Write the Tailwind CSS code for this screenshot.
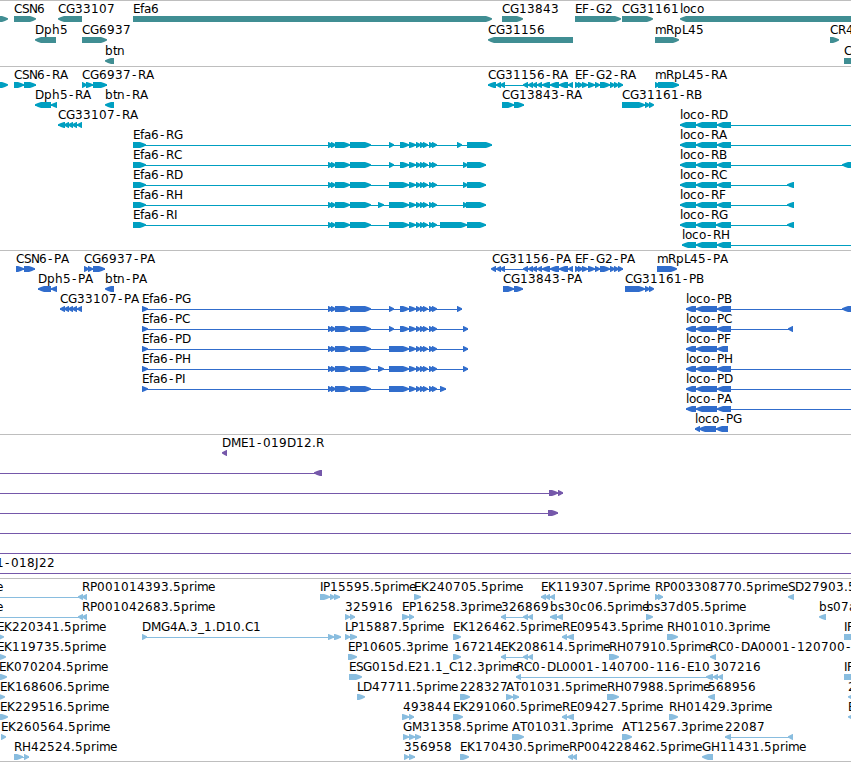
<!DOCTYPE html>
<html lang="en">
<head>
    <meta charset="UTF-8">
    <meta name="viewport" content="width=device-width, initial-scale=1.0">
    <title>Genome Browser</title>
    <script src="https://cdn.jsdelivr.net/npm/@tailwindcss/browser@4"></script>
</head>
<body class="bg-white overflow-hidden">

    <main id="tracks" class="flex flex-col w-[851px] h-[762px] border-b border-[#bebebe] overflow-hidden font-['DejaVu_Sans',sans-serif] text-[12px] text-black">
        <!-- Genes -->
        <section class="h-[66px] shrink-0 border-t border-[#bebebe]"><svg id="genes" class="block w-full h-full fill-[#408e93]"></svg></section>
        <!-- Transcripts -->
        <section class="h-[184px] shrink-0 border-t border-[#bebebe]"><svg id="transcripts" class="block w-full h-full fill-[#009fc1]"></svg></section>
        <!-- Proteins -->
        <section class="h-[184px] shrink-0 border-t border-[#bebebe]"><svg id="proteins" class="block w-full h-full fill-[#316dcc]"></svg></section>
        <!-- Clones -->
        <section class="h-[144px] shrink-0 border-t border-[#bebebe]"><svg id="clones" class="block w-full h-full fill-[#7558aa]"></svg></section>
        <!-- ESTs -->
        <section class="h-[183px] shrink-0 border-t border-[#bebebe]"><svg id="ests" class="block w-full h-full fill-[#89bddf]"></svg></section>
    </main>

    <script>
        // --- Feature data: [row, label, label x, strand, "start,end ..."] ---
        const genes = [
            [0, '', 0, '+', '-8,8'],
            [0, 'CSN6', 14, '+', '14,36'],
            [0, 'CG33107', 58, '-', '58,82'],
            [0, 'Efa6', 133, '+', '133,492'],
            [0, 'CG13843', 502, '+', '502,523'],
            [0, 'EF-G2', 575, '+', '575,621'],
            [0, 'CG31161', 622, '+', '622,653'],
            [0, 'loco', 680, '-', '680,870'],
            [1, 'Dph5', 35, '-', '35,56'],
            [1, 'CG6937', 82, '+', '82,107'],
            [1, 'CG31156', 488, '-', '488,573'],
            [1, 'mRpL45', 655, '+', '655,679'],
            [1, 'CR4', 830, '+', '830,839'],
            [2, 'btn', 105, '-', '105,114'],
            [2, 'C', 844, '+', '844,870'],
        ];

        const efaStart = '328,331 331,335 335,350 350,371 ';
        const efaMid = '409,416 416,420 420,423 423,428 429,432 432,437 ';
        const cg31156 = '523,528 528,533 533,537 537,542 542,550 550,559 559,568 568,573';
        const efg2 = '575,578 578,582 582,588 588,595 595,600 600,610 610,614 614,618 618,623';

        const transcripts = [
            [0, '', 0, '+', '-8,8'],
            [0, 'CSN6-RA', 14, '+', '14,24 24,36'],
            [0, 'CG6937-RA', 82, '+', '82,86 86,93 93,107'],
            [0, 'CG31156-RA', 488, '-', '488,496 496,501 501,505 ' + cg31156],
            [0, 'EF-G2-RA', 575, '+', efg2],
            [0, 'mRpL45-RA', 655, '+', '655,658 658,679'],
            [1, 'Dph5-RA', 35, '-', '35,51 51,57'],
            [1, 'btn-RA', 105, '-', '105,114'],
            [1, 'CG13843-RA', 502, '+', '502,514 514,524'],
            [1, 'CG31161-RB', 622, '+', '622,645 645,649 649,653'],
            [2, 'CG33107-RA', 58, '-', '58,65 65,69 69,73 73,77 77,82'],
            [3, 'Efa6-RG', 133, '+', '133,146 ' + efaStart + '389,394 400,409 ' + efaMid + '457,462 467,492'],
            [4, 'Efa6-RC', 133, '+', '133,146 ' + efaStart + '389,394 400,409 ' + efaMid + '463,467 467,486'],
            [5, 'Efa6-RD', 133, '+', '133,146 ' + efaStart + '389,409 ' + efaMid + '463,467 467,486'],
            [6, 'Efa6-RH', 133, '+', '133,146 ' + efaStart + '378,384 389,409 ' + efaMid + '463,466 466,486'],
            [7, 'Efa6-RI', 133, '+', '133,146 ' + efaStart + '389,409 ' + efaMid + '440,467 467,486'],
            [2, 'loco-RD', 680, '-', '680,696 696,717 717,731 870,880'],
            [3, 'loco-RA', 680, '-', '680,696 696,717 717,731 870,880'],
            [4, 'loco-RB', 680, '-', '680,696 696,717 717,731 842,860'],
            [5, 'loco-RC', 680, '-', '680,696 696,717 717,731 787,794'],
            [6, 'loco-RF', 680, '-', '680,696 696,717 717,731 787,794'],
            [7, 'loco-RG', 680, '-', '680,696 696,716 716,731 787,794'],
            [8, 'loco-RH', 682, '-', '682,696 696,717 717,731 870,880'],
        ];

        const proteins = [
            [0, 'CSN6-PA', 16, '+', '16,24 24,35'],
            [0, 'CG6937-PA', 84, '+', '84,88 88,93 93,105'],
            [0, 'CG31156-PA', 492, '-', '492,496 496,501 501,505 ' + cg31156],
            [0, 'EF-G2-PA', 575, '+', efg2],
            [0, 'mRpL45-PA', 657, '+', '657,677'],
            [1, 'Dph5-PA', 38, '-', '38,51 51,57'],
            [1, 'btn-PA', 105, '-', '105,114'],
            [1, 'CG13843-PA', 503, '+', '503,514 514,523'],
            [1, 'CG31161-PB', 625, '+', '625,645 645,649 649,653'],
            [2, 'CG33107-PA', 60, '-', '60,65 65,69 69,73 73,77 77,82'],
            [2, 'Efa6-PG', 142, '+', '142,148 ' + efaStart + '389,394 400,409 ' + efaMid + '457,462'],
            [3, 'Efa6-PC', 142, '+', '142,148 ' + efaStart + '389,394 400,409 ' + efaMid + '463,468'],
            [4, 'Efa6-PD', 142, '+', '142,148 ' + efaStart + '389,409 ' + efaMid + '463,468'],
            [5, 'Efa6-PH', 142, '+', '142,148 ' + efaStart + '378,384 389,409 ' + efaMid + '463,468'],
            [6, 'Efa6-PI', 142, '+', '142,148 ' + efaStart + '389,409 ' + efaMid + '440,446'],
            [2, 'loco-PB', 686, '-', '686,696 696,717 717,731 842,860'],
            [3, 'loco-PC', 686, '-', '686,696 696,717 717,731 788,793'],
            [4, 'loco-PF', 686, '-', '686,696 696,717 717,728'],
            [5, 'loco-PH', 686, '-', '686,696 696,717 717,731 870,880'],
            [6, 'loco-PD', 686, '-', '686,696 696,717 717,731 870,880'],
            [7, 'loco-PA', 686, '-', '686,696 696,717 717,731 870,880'],
            [8, 'loco-PG', 695, '-', '695,700 699,716 716,728'],
        ];

        const clones = [
            [0, 'DME1-019D12.R', 222, '-', '222,227'],
            [1, '', 0, '-', '-20,-10 314,322'],
            [2, '', 0, '+', '-20,-10 549,558 558,563'],
            [3, '', 0, '+', '-20,-10 548,558'],
            [4, '', 0, '+', '-20,-10 870,880'],
            [5, '', 0, '+', '-20,-10 870,880'],
            [6, '1-018J22', -4, '+', '-20,-10 870,880'],
        ];

        const ests = [
            [0, 'e', -4, '-', '-20,-10 79,83 83,87'],
            [0, 'RP001014393.5prime', 82, '-', ''],
            [0, 'IP15595.5prime', 320, '+', '320,330 330,334 334,340'],
            [0, 'EK240705.5prime', 414, '+', '414,421'],
            [0, 'EK119307.5prime', 541, '-', '541,546 546,550 550,555'],
            [0, 'RP003308770.5prime', 655, '+', '655,658 658,663'],
            [0, 'SD27903.5', 788, '-', '788,794'],
            [1, 'e', -4, '-', '-20,-10 79,83 83,87'],
            [1, 'RP001042683.5prime', 82, '-', ''],
            [1, '325916', 345, '+', '345,350 350,355'],
            [1, 'EP16258.3prime', 402, '+', '402,409 409,414'],
            [1, '326869', 501, '-', '501,506 523,528 528,533'],
            [1, 'bs30c06.5prime', 550, '-', '550,557 557,563'],
            [1, 'bs37d05.5prime', 646, '+', '646,653'],
            [1, 'bs07a', 819, '-', '819,826'],
            [2, 'EK220341.5prime', -3, '+', '-3,4'],
            [2, 'DMG4A.3_1.D10.C1', 142, '+', '142,147 328,334 334,341'],
            [2, 'LP15887.5prime', 345, '+', '345,350 350,357'],
            [2, 'EK126462.5prime', 453, '+', '453,461'],
            [2, 'RE09543.5prime', 562, '-', '562,567 567,574'],
            [2, 'RH01010.3prime', 667, '+', '667,678'],
            [2, 'IP', 844, '+', '844,870'],
            [3, 'EK119735.5prime', -3, '+', '-6,6'],
            [3, 'EP10605.3prime', 348, '+', '348,357'],
            [3, '167214', 454, '+', '453,461'],
            [3, 'EK208614.5prime', 501, '-', '501,506 523,528 528,533'],
            [3, 'RH07910.5prime', 609, '+', '609,619'],
            [3, 'RC0-DA0001-120700-', 710, '-', '710,716'],
            [4, 'EK070204.5prime', -1, '+', '-6,7'],
            [4, 'ESG015d.E21.1_C12.3prime', 349, '+', '349,362'],
            [4, 'RC0-DL0001-140700-116-E10', 516, '-', '516,521 706,713'],
            [4, '307216', 713, '-', '713,718 718,723'],
            [4, 'IP', 844, '+', '844,870'],
            [5, 'EK168606.5prime', 0, '+', '-3,5'],
            [5, 'LD47711.5prime', 357, '+', '357,365'],
            [5, '228327', 460, '+', '460,470'],
            [5, 'AT01031.5prime', 506, '+', '506,513 513,519'],
            [5, 'RH07988.5prime', 607, '+', '607,619'],
            [5, '568956', 708, '-', '708,715'],
            [5, '2', 848, '-', '848,870'],
            [6, 'EK229516.5prime', 0, '+', '-6,8'],
            [6, '493844', 403, '+', '402,409 409,414'],
            [6, 'EK291060.5prime', 453, '+', '453,463'],
            [6, 'RE09427.5prime', 562, '-', '562,567 567,574'],
            [6, 'RH01429.3prime', 669, '+', '669,678'],
            [6, 'E', 848, '-', '848,870'],
            [7, 'EK260564.5prime', 1, '+', '1,6'],
            [7, 'GM31358.5prime', 403, '+', '403,409 409,415 415,421'],
            [7, 'AT01031.3prime', 512, '+', '512,524'],
            [7, 'AT12567.3prime', 622, '+', '622,632'],
            [7, '22087', 725, '-', '725,731 788,793'],
            [8, 'RH42524.5prime', 14, '+', '14,23 24,29'],
            [8, '356958', 404, '+', '404,409 409,415'],
            [8, 'EK170430.5prime', 460, '+', '460,469'],
            [8, 'RP004228462.5prime', 569, '-', '569,573 573,577'],
            [8, 'GH11431.5prime', 702, '-', '702,713'],
        ];

        // --- Whole-pixel glyph advances, digits and the rest default to 8 ---
        const advance = {
            D: 9, E: 7, F: 7, G: 9, H: 9, I: 3, J: 4, L: 6, M: 10, P: 7, S: 7, T: 7,
            a: 7, c: 7, e: 7, f: 4, i: 3, l: 3, m: 11, o: 7, r: 5, s: 6, t: 4,
            '-': 7, '.': 4, '_': 6
        };

        const glyphPositions = (label, x) => {
            const xs = [];
            for (const ch of label) {
                // the dash is centred in its wide cell
                xs.push(ch === '-' ? x + 1 : x);
                x += advance[ch] || 8;
            }
            return xs.join(' ');
        };

        function drawTrack(id, features, pitch) {
            let out = '';
            let labels = '';
            features.forEach(([row, label, x, strand, spans]) => {
                const top = 15 + row * pitch;
                const exons = spans ? spans.split(' ').map(s => s.split(',').map(Number)) : [];
                if (exons.length > 1) {
                    const from = exons[0][0];
                    const to = exons[exons.length - 1][1];
                    out += `<rect x="${from}" y="${top + 3}" width="${to - from}" height="1"/>`;
                }
                exons.forEach(([a, b]) => {
                    // d points towards the tip, short exons keep a minimum width
                    const d = strand === '+' ? 1 : -1;
                    const len = Math.max(5, b - a);
                    const tail = d > 0 ? a : b;
                    const tip = tail + d * len;
                    const neck = tip - d * Math.min(6, len - 0.5);
                    const mid = tip - d * Math.min(3, len / 2);
                    out += `<path d="M${tail} ${top}H${neck}L${mid} ${top + 0.9}L${tip} ${top + 2.3}V${top + 3.4}L${mid} ${top + 5.1}L${neck} ${top + 6}H${tail}z"/>`;
                });
                if (label) {
                    labels += `<text x="${glyphPositions(label, x)}" y="${top - 3}" class="fill-black">${label}</text>`;
                }
            });
            document.getElementById(id).innerHTML = out + labels;
        }

        drawTrack('genes', genes, 21);
        drawTrack('transcripts', transcripts, 20);
        drawTrack('proteins', proteins, 20);
        drawTrack('clones', clones, 20);
        drawTrack('ests', ests, 20);
    </script>
</body>
</html>
